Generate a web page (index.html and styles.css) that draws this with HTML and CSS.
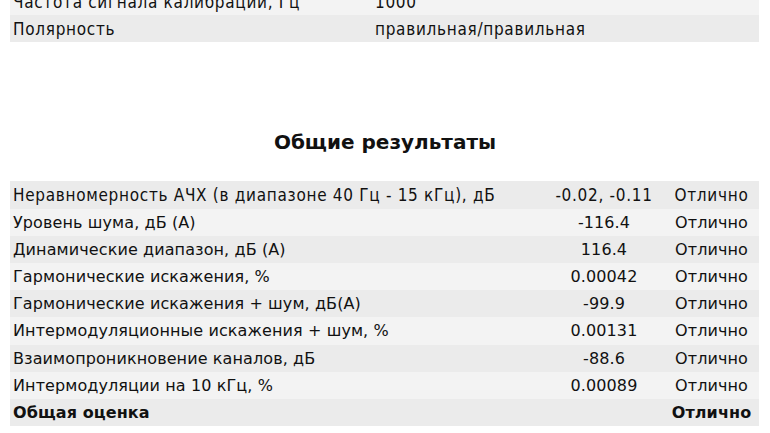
FILE: index.html
```html
<!DOCTYPE html>
<html>
  <head>
    <title>Результаты тестирования</title>
    <meta charset="utf-8">
    <link rel="stylesheet" href="styles.css">
  </head>
  <body>
    <table class="info">
      <tr class="light"><td class="key">Частота сигнала калибрации, Гц</td><td>1000</td></tr>
      <tr class="dark"><td class="key">Полярность</td><td>правильная/правильная</td></tr>
    </table>

    <h2>Общие результаты</h2>

    <table class="results">
      <tr class="dark narrow"><td class="key">Неравномерность АЧХ (в диапазоне 40 Гц - 15 кГц), дБ</td><td class="val">-0.02, -0.11</td><td class="mark">Отлично</td></tr>
      <tr class="light"><td class="key">Уровень шума, дБ (А)</td><td class="val">-116.4</td><td class="mark">Отлично</td></tr>
      <tr class="dark"><td class="key">Динамические диапазон, дБ (А)</td><td class="val">116.4</td><td class="mark">Отлично</td></tr>
      <tr class="light"><td class="key">Гармонические искажения, %</td><td class="val">0.00042</td><td class="mark">Отлично</td></tr>
      <tr class="dark"><td class="key">Гармонические искажения + шум, дБ(А)</td><td class="val">-99.9</td><td class="mark">Отлично</td></tr>
      <tr class="light"><td class="key">Интермодуляционные искажения + шум, %</td><td class="val">0.00131</td><td class="mark">Отлично</td></tr>
      <tr class="dark"><td class="key">Взаимопроникновение каналов, дБ</td><td class="val">-88.6</td><td class="mark">Отлично</td></tr>
      <tr class="light"><td class="key">Интермодуляции на 10 кГц, %</td><td class="val">0.00089</td><td class="mark">Отлично</td></tr>
      <tr class="dark total"><td class="key">Общая оценка</td><td class="val"></td><td class="mark">Отлично</td></tr>
    </table>
  </body>
</html>
```

FILE: styles.css
```css
body {margin:0; background:#fff; color:#111; font-family:"DejaVu Sans",Verdana,sans-serif; font-size:16px;}
table {border-collapse:collapse; width:749px; margin-left:10px; table-layout:fixed;}
td {height:27.2px; padding:0 3px; white-space:nowrap; vertical-align:middle;}
.light {background:#f3f3f3;}
.dark {background:#ebebeb;}
.info {margin-top:-12px;}
.info .key {width:356px;}
.info td, .narrow td {font-family:"DejaVu Sans Condensed","DejaVu Sans",sans-serif; font-stretch:condensed; font-size:17px; letter-spacing:0.7px;}
h2 {margin:82px 0 0; height:57px; text-align:center; font-size:20px; font-weight:bold; line-height:36px;}
.results .key {width:528px;}
.results .val {width:114px; text-align:center;}
.results .mark {text-align:center;}
.results td {letter-spacing:0.1px;}
.results .narrow td {letter-spacing:0.7px;}
.total td {font-weight:bold;}
```
